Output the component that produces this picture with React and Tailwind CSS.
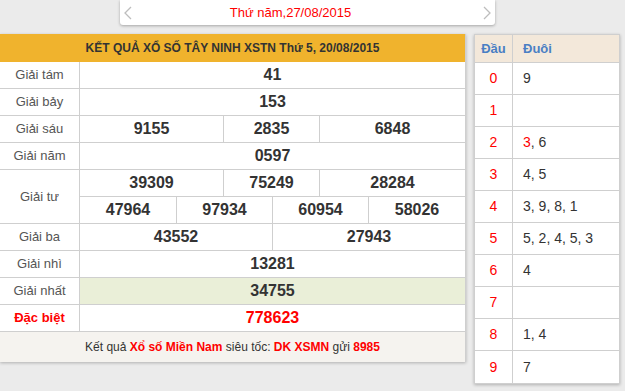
import React from 'react';

const font = { fontFamily: '"Liberation Sans", Arial, sans-serif' };

const rows = [
  { label: 'Giải tám', cells: [['41', 'w-[385px]']] },
  { label: 'Giải bảy', cells: [['153', 'w-[385px]']] },
  { label: 'Giải sáu', cells: [['9155', 'w-[143px]'], ['2835', 'w-[96px]'], ['6848', 'w-[146px]']] },
  { label: 'Giải năm', cells: [['0597', 'w-[385px]']] },
];

const rowsAfter = [
  { label: 'Giải ba', cells: [['43552', 'w-[192px]'], ['27943', 'w-[193px]']] },
  { label: 'Giải nhì', cells: [['13281', 'w-[385px]']] },
  { label: 'Giải nhất', cells: [['34755', 'w-[385px]']], green: true },
];

const loto = [
  ['0', [['9']]],
  ['1', []],
  ['2', [['3', true], ['6']]],
  ['3', [['4'], ['5']]],
  ['4', [['3'], ['9'], ['8'], ['1']]],
  ['5', [['5'], ['2'], ['4'], ['5'], ['3']]],
  ['6', [['4']]],
  ['7', []],
  ['8', [['1'], ['4']]],
  ['9', [['7']]],
];

const Row = ({ label, cells, green }) => (
  <div className="flex h-[27px] border-b border-[#cfcfcf]">
    <div className="w-[80px] flex items-center justify-center text-[13px] text-[#555] border-r border-[#cfcfcf]">{label}</div>
    {cells.map(([v, w], i) => (
      <div
        key={i}
        className={`${w} flex items-center justify-center text-[16px] font-bold text-[#333] ${i > 0 ? 'border-l border-[#cfcfcf]' : ''} ${green ? 'bg-[#eaefd8]' : ''}`}
      >
        {v}
      </div>
    ))}
  </div>
);

const Chevron = ({ dir }) => (
  <svg width="8" height="14" viewBox="0 0 8 14" fill="none">
    <polyline
      points={dir === 'left' ? '7,1 1,7 7,13' : '1,1 7,7 1,13'}
      stroke="#bdbdbd"
      strokeWidth="1.3"
    />
  </svg>
);

export default function App() {
  return (
    <div className="w-[625px] h-[391px] overflow-hidden bg-[#ebebeb]" style={font}>
      {/* date switcher */}
      <div className="ml-[120px] w-[375px] h-[25px] bg-white rounded-b-[3px] shadow-[0_1px_3px_rgba(0,0,0,0.3)] flex items-center px-[4px]">
        <Chevron dir="left" />
        <span className="flex-1 text-center pr-[34px] text-[13px] text-[#ff0000]">Thứ năm,27/08/2015</span>
        <Chevron dir="right" />
      </div>

      <div className="flex mt-[9px] items-start">
        {/* result table */}
        <div className="w-[466px] bg-white border-r border-[#cfcfcf] shadow-[0_1px_3px_rgba(0,0,0,0.25)]">
          <div className="h-[28px] bg-[#f0b32d] flex items-center justify-center text-[12px] font-bold text-[#333]">
            KẾT QUẢ XỔ SỐ TÂY NINH XSTN Thứ 5, 20/08/2015
          </div>
          {rows.map((r) => <Row key={r.label} {...r} />)}

          {/* giai tu */}
          <div className="flex border-b border-[#cfcfcf]">
            <div className="w-[80px] flex items-center justify-center text-[13px] text-[#555] border-r border-[#cfcfcf]">Giải tư</div>
            <div className="flex flex-col">
              <div className="flex h-[27px] border-b border-[#cfcfcf]">
                {[['39309', 'w-[143px]'], ['75249', 'w-[96px]'], ['28284', 'w-[146px]']].map(([v, w], i) => (
                  <div key={v} className={`${w} flex items-center justify-center text-[16px] font-bold text-[#333] ${i > 0 ? 'border-l border-[#cfcfcf]' : ''}`}>{v}</div>
                ))}
              </div>
              <div className="flex h-[26px]">
                {['47964', '97934', '60954', '58026'].map((v, i) => (
                  <div key={v} className={`${i === 3 ? 'w-[97px]' : 'w-[96px]'} flex items-center justify-center text-[16px] font-bold text-[#333] ${i > 0 ? 'border-l border-[#cfcfcf]' : ''}`}>{v}</div>
                ))}
              </div>
            </div>
          </div>

          {rowsAfter.map((r) => <Row key={r.label} {...r} />)}

          <div className="flex h-[27px] border-b border-[#cfcfcf]">
            <div className="w-[80px] flex items-center justify-center text-[13px] font-bold text-[#ff0000] border-r border-[#cfcfcf]">Đặc biệt</div>
            <div className="w-[385px] flex items-center justify-center text-[16px] font-bold text-[#ff0000]">778623</div>
          </div>

          <div className="h-[30px] bg-[#f5f3ef] flex items-center justify-center text-[12px] text-[#333]">
            <span>Kết quả&nbsp;</span>
            <span className="font-bold text-[#ff0000]">Xổ số Miền Nam</span>
            <span>&nbsp;siêu tốc:&nbsp;</span>
            <span className="font-bold text-[#ff0000]">DK XSMN</span>
            <span>&nbsp;gửi&nbsp;</span>
            <span className="font-bold text-[#ff0000]">8985</span>
          </div>
        </div>

        {/* loto table */}
        <div className="ml-[8px] w-[146px] bg-white border border-[#cfcfcf] shadow-[0_1px_3px_rgba(0,0,0,0.25)]">
          <div className="flex h-[28px] bg-[#f3e8da] border-b border-[#cfcfcf] text-[13px] font-bold text-[#4a7fc4]">
            <div className="w-[38px] flex items-center justify-center border-r border-[#cfcfcf]">Đầu</div>
            <div className="flex-1 flex items-center pl-[10px]">Đuôi</div>
          </div>
          {loto.map(([d, tails], idx) => (
            <div key={d} className={`flex h-[32px] text-[14px] ${idx < 9 ? 'border-b border-[#cfcfcf]' : ''}`}>
              <div className="w-[38px] flex items-center justify-center border-r border-[#cfcfcf] text-[#ff0000]">{d}</div>
              <div className="flex-1 flex items-center pl-[10px] text-[#333]">
                {tails.map(([t, red], i) => (
                  <span key={i} className="whitespace-pre">
                    <span className={red ? 'text-[#ff0000]' : ''}>{t}</span>
                    {i < tails.length - 1 ? ', ' : ''}
                  </span>
                ))}
              </div>
            </div>
          ))}
        </div>
      </div>

      {/* next panels, cut off */}
      <div className="flex mt-[8px]">
        <div className="w-[466px] h-[10px] bg-white border-t border-[#cfcfcf]"></div>
        <div className="ml-[8px] w-[146px] h-[10px] bg-white border-t border-[#cfcfcf]"></div>
      </div>
    </div>
  );
}
